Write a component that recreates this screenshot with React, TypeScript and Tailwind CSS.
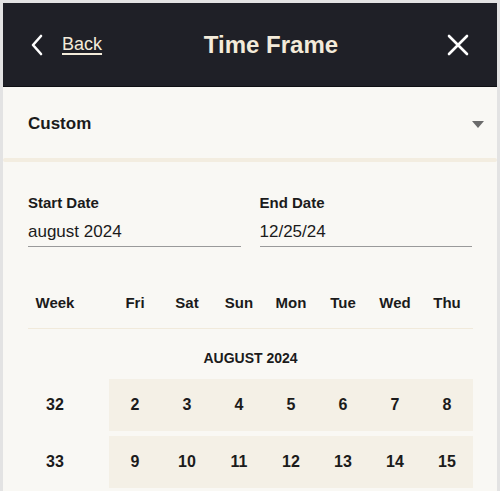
import React from "react";

const days = ["Fri", "Sat", "Sun", "Mon", "Tue", "Wed", "Thu"];

const weeks = [
  { week: 32, dates: [2, 3, 4, 5, 6, 7, 8] },
  { week: 33, dates: [9, 10, 11, 12, 13, 14, 15] },
];

export default function App() {
  return (
    <div
      className="w-[500px] h-[491px] overflow-hidden border-[3px] border-b-0 border-[#e3e3e3] bg-[#f9f8f4] text-[#1b1b1b]"
      style={{ fontFamily: '"Liberation Sans", Arial, sans-serif' }}
    >
      {/* Header */}
      <header className="h-[84px] bg-[#1f2027] border-b border-[#0f1014] flex items-center px-[26px] text-[#f3ebda]">
        <button className="flex items-center gap-[17px] w-[120px]">
          <svg width="16" height="24" viewBox="0 0 16 24" fill="none">
            <path d="M12 3 L4 12 L12 21" stroke="#ffffff" strokeWidth="2.6" strokeLinecap="round" strokeLinejoin="round" />
          </svg>
          <span className="text-[18px] underline underline-offset-[3px] decoration-[1.5px]">Back</span>
        </button>
        <h1 className="flex-1 text-center text-[24px] font-bold pl-[42px]">Time Frame</h1>
        <div className="w-[120px] flex justify-end pr-[1px]">
          <svg width="24" height="24" viewBox="0 0 24 24" fill="none">
            <path d="M3 3 L21 21 M21 3 L3 21" stroke="#ffffff" strokeWidth="2.6" strokeLinecap="round" />
          </svg>
        </div>
      </header>

      {/* Time frame select */}
      <div className="h-[71px] flex items-center justify-between pl-[25px] pr-[13px] pt-[3px]">
        <span className="text-[17px] font-bold">Custom</span>
        <svg width="12" height="7" viewBox="0 0 12 7">
          <path d="M0 0 H12 L6 7 Z" fill="#6b6b6b" />
        </svg>
      </div>
      <div className="h-[4px] rounded-full bg-[#f3ede0]" />

      {/* Dates */}
      <div className="px-[25px] pt-[31px] grid grid-cols-2 gap-[19px]">
        <div>
          <div className="text-[15px] font-bold leading-[20px]">Start Date</div>
          <div className="mt-[9px] pb-[4px] text-[17px] leading-[20px] border-b border-[#9a9a9a]">august 2024</div>
        </div>
        <div>
          <div className="text-[15px] font-bold leading-[20px]">End Date</div>
          <div className="mt-[9px] pb-[4px] text-[17px] leading-[20px] border-b border-[#9a9a9a]">12/25/24</div>
        </div>
      </div>

      {/* Calendar */}
      <div className="mx-[25px] w-[445px] mt-[32px]">
        <div className="h-[50px] flex items-center border-b border-[#f1eadb] text-[15px] font-bold">
          <div className="w-[52px] text-center ml-[1px]">Week</div>
          <div className="w-[28px]" />
          {days.map((d) => (
            <div key={d} className="w-[52px] text-center">
              {d}
            </div>
          ))}
        </div>
        <div className="h-[50px] flex items-center justify-center pt-[8px] text-[14px] font-bold">AUGUST 2024</div>
        <div className="flex flex-col gap-[5px]">
          {weeks.map((w) => (
            <div key={w.week} className="flex h-[52px] text-[16px] font-bold">
              <div className="w-[52px] ml-[1px] flex items-center justify-center">{w.week}</div>
              <div className="w-[28px]" />
              <div className="flex bg-[#f4f0e6]">
                {w.dates.map((n) => (
                  <div key={n} className="w-[52px] flex items-center justify-center">
                    {n}
                  </div>
                ))}
              </div>
            </div>
          ))}
        </div>
      </div>
    </div>
  );
}
